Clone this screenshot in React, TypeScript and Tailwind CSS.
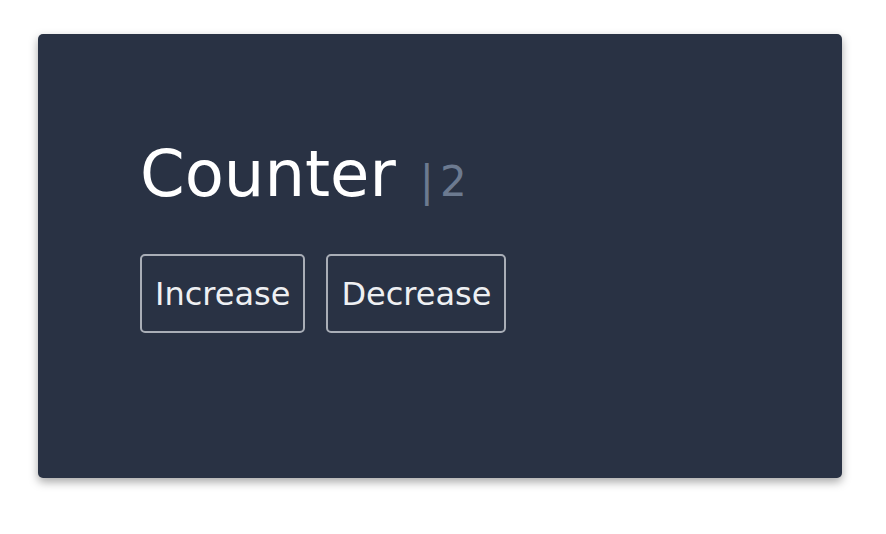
import React, { useState } from "react";

export default function App() {
  const [count, setCount] = useState(2);

  return (
    <div className="w-[886px] h-[534px] bg-white pt-[34px] pl-[38px]">
      <div
        className="w-[804px] h-[444px] rounded-[5px] bg-[#293244] shadow-[0_4px_10px_rgba(0,0,0,0.35)] pl-[102px] pt-[100px]"
        style={{ fontFamily: '"DejaVu Sans", sans-serif' }}
      >
        <h1 className="flex items-baseline text-[64px] leading-[80px] text-white">
          <span>Counter</span>
          <span className="ml-[24px] text-[42px] text-[#6c7a90]">|</span>
          <span className="ml-[6px] text-[42px] text-[#6c7a90]">{count}</span>
        </h1>
        <div className="flex gap-[21px] mt-[32px]">
          <button
            onClick={() => setCount(count + 1)}
            className="h-[79px] px-[13px] rounded-[5px] border-2 border-[#a9aeb7] text-[32px] text-[#eef0f3]"
          >
            Increase
          </button>
          <button
            onClick={() => setCount(count - 1)}
            className="h-[79px] px-[13px] rounded-[5px] border-2 border-[#a9aeb7] text-[32px] text-[#eef0f3]"
          >
            Decrease
          </button>
        </div>
      </div>
    </div>
  );
}
